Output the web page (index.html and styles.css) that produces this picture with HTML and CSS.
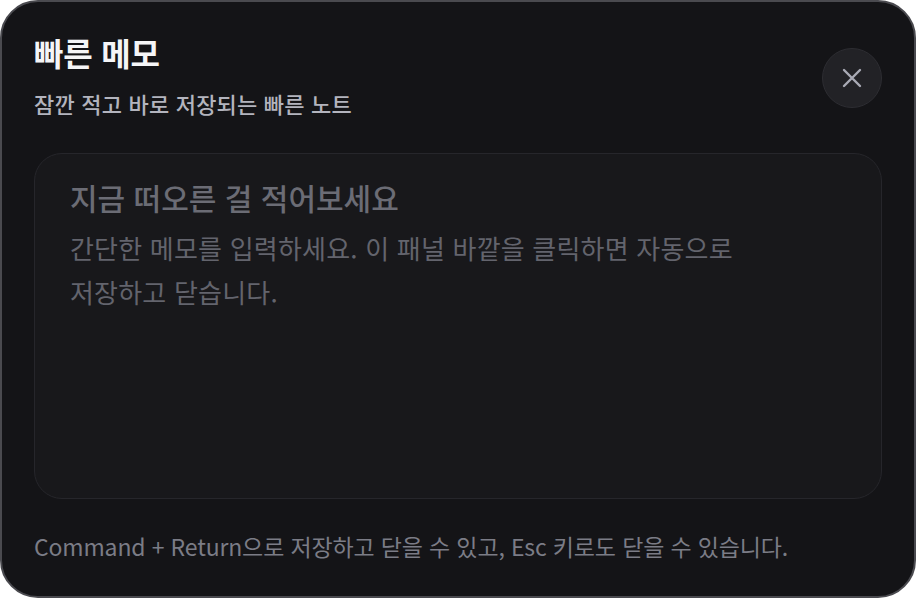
FILE: index.html
```html
<!DOCTYPE html>
<html lang="ko">
<head>
<meta charset="utf-8">
<title>빠른 메모</title>
<link rel="stylesheet" href="styles.css">
</head>
<body>
<div class="panel">
  <div class="header">
    <div class="titles">
      <h1 class="title">빠른 메모</h1>
      <p class="subtitle">잠깐 적고 바로 저장되는 빠른 노트</p>
    </div>
    <button class="close" aria-label="닫기">
      <svg width="22" height="22" viewBox="0 0 22 22" fill="none" stroke="currentColor" stroke-width="2.4" stroke-linecap="round">
        <path d="M3 3 L19 19 M19 3 L3 19"/>
      </svg>
    </button>
  </div>
  <div class="editor">
    <div class="ph-title">지금 떠오른 걸 적어보세요</div>
    <div class="ph-body">간단한 메모를 입력하세요. 이 패널 바깥을 클릭하면 자동으로 저장하고 닫습니다.</div>
  </div>
  <p class="hint">Command + Return으로 저장하고 닫을 수 있고, Esc 키로도 닫을 수 있습니다.</p>
</div>
</body>
</html>
```
FILE: styles.css
```css
* { box-sizing: border-box; }
html, body {
  margin: 0;
  padding: 0;
  background: #ffffff;
}
body {
  font-family: "Noto Sans CJK KR", "Noto Sans", sans-serif;
  word-break: keep-all;
}
.panel {
  width: 916px;
  height: 598px;
  background: #141417;
  border: 2px solid #4a4a4f;
  border-radius: 38px;
  padding: 30px 32px 0 32px;
  display: flex;
  flex-direction: column;
}
.header {
  display: flex;
  justify-content: space-between;
  align-items: flex-start;
  height: 86px;
}
.title {
  margin: 0;
  font-size: 32px;
  line-height: 40px;
  font-weight: 700;
  color: #f5f5f7;
  letter-spacing: -0.2px;
}
.subtitle {
  margin: 16px 0 0 0;
  font-size: 22px;
  line-height: 30px;
  font-weight: 500;
  color: #b3b4be;
  letter-spacing: 0.2px;
}
.close {
  margin-top: 16px;
  width: 60px;
  height: 60px;
  border-radius: 50%;
  background: #222226;
  border: 1px solid #2d2d32;
  color: #a9aab5;
  display: flex;
  align-items: center;
  justify-content: center;
  padding: 0;
}
.editor {
  margin-top: 35px;
  height: 346px;
  flex-shrink: 0;
  background: #18181b;
  border: 1px solid #26262b;
  border-radius: 28px;
  padding: 23px 35px;
}
.ph-title {
  font-size: 30px;
  line-height: 40px;
  font-weight: 500;
  color: #6b6c75;
  letter-spacing: 0;
}
.ph-body {
  margin-top: 9px;
  max-width: 700px;
  font-size: 26px;
  line-height: 44px;
  color: #63646d;
  letter-spacing: 0.2px;
}
.hint {
  margin: 32px 0 0 0;
  font-size: 23px;
  line-height: 30px;
  color: #7b7c86;
  letter-spacing: -0.15px;
}
```
